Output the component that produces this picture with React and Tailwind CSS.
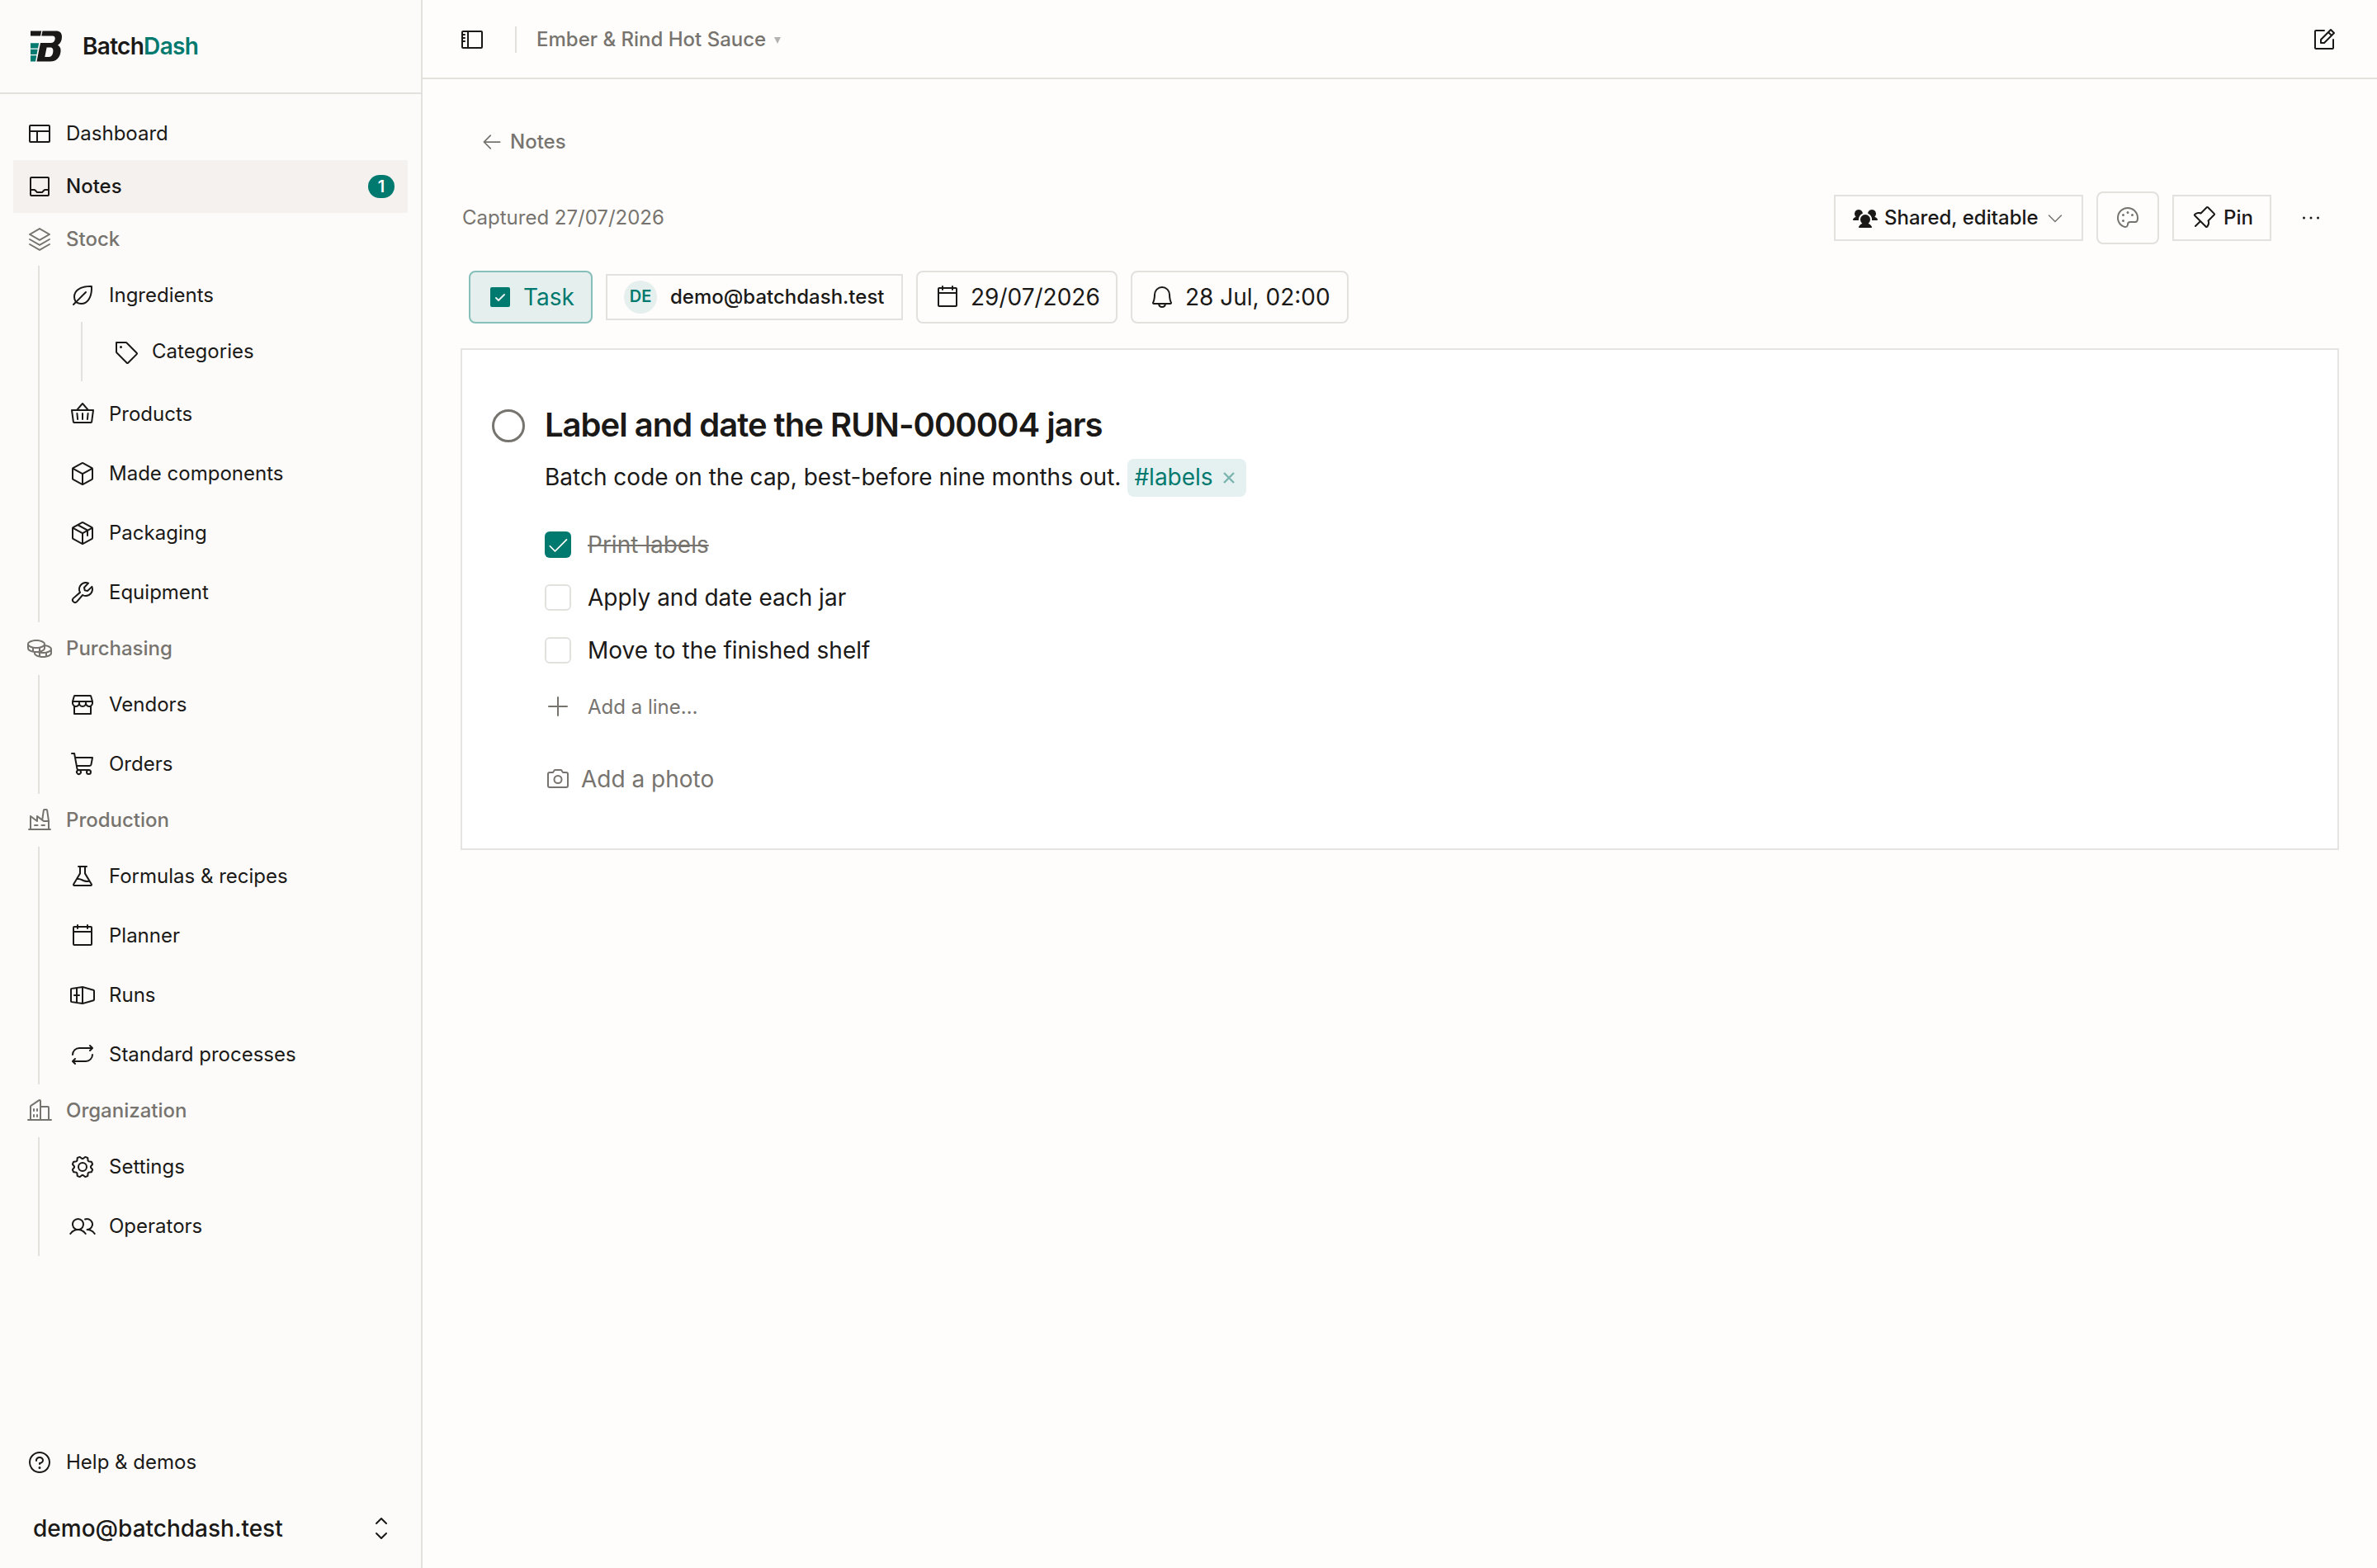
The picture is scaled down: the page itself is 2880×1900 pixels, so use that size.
import {
  PiArrowLeft, PiBasket, PiBell, PiBuildings, PiCalendarBlank, PiCamera, PiCaretDown,
  PiCaretUpDown, PiCheck, PiCheckSquareFill, PiCoins, PiCube, PiDotsThree, PiFactory, PiFlask,
  PiGear, PiLayout, PiLeaf, PiNotePencil, PiPackage, PiPalette, PiPlus, PiPushPin, PiQuestion,
  PiRepeat, PiShippingContainer, PiShoppingCart, PiSidebar, PiStack, PiStorefront, PiTag, PiTray,
  PiUsers, PiUsersThreeFill, PiWrench,
} from 'react-icons/pi'

const sections = [
  {
    title: 'Stock',
    icon: PiStack,
    items: [
      { label: 'Ingredients', icon: PiLeaf, children: [{ label: 'Categories', icon: PiTag }] },
      { label: 'Products', icon: PiBasket },
      { label: 'Made components', icon: PiCube },
      { label: 'Packaging', icon: PiPackage },
      { label: 'Equipment', icon: PiWrench },
    ],
  },
  {
    title: 'Purchasing',
    icon: PiCoins,
    items: [
      { label: 'Vendors', icon: PiStorefront },
      { label: 'Orders', icon: PiShoppingCart },
    ],
  },
  {
    title: 'Production',
    icon: PiFactory,
    items: [
      { label: 'Formulas & recipes', icon: PiFlask },
      { label: 'Planner', icon: PiCalendarBlank },
      { label: 'Runs', icon: PiShippingContainer },
      { label: 'Standard processes', icon: PiRepeat },
    ],
  },
  {
    title: 'Organization',
    icon: PiBuildings,
    items: [
      { label: 'Settings', icon: PiGear },
      { label: 'Operators', icon: PiUsers },
    ],
  },
]

const lines = [
  { text: 'Print labels', done: true },
  { text: 'Apply and date each jar', done: false },
  { text: 'Move to the finished shelf', done: false },
]

function Logo() {
  return (
    <svg viewBox="0 0 38 38" className="size-[38px]">
      <path fill="#1a1917" d="M0 .5h13.2L12 6.5H0z" />
      <path
        fill="#1a1917"
        fillRule="evenodd"
        d="M14.5.5H31c4.500 0 7 2.500 7 7 0 5-2 8.500-5 10.200 2.600 1.300 4 3.800 3.500 7.800C35.700 33 31 37.500 24 37.500H7.500L12 15h12.500c3 0 4.800-1.800 5.200-4.700.3-2.400-.8-3.800-3.200-3.800H13.300zM19.600 20.500 17.300 32H22c3 0 4.800-2 5.300-6 .5-3.600-.6-5.500-3.800-5.500z"
      />
      <path fill="#00796f" d="M0 15.300h10.200L9 21.400H0zM0 22.700h8.700L7.500 29H0zM0 30.300h7.300L6 37.500H0z" />
    </svg>
  )
}

function NavItem({ item }) {
  const Icon = item.icon
  return (
    <li>
      <a className="flex h-16 items-center gap-4 px-4">
        <Icon className="size-8 shrink-0" />
        <span>{item.label}</span>
      </a>
      {item.children && (
        <ul className="ml-[30px] flex flex-col gap-2 border-l-2 border-[#e2e1de] py-1 pl-5">
          {item.children.map(child => <NavItem key={child.label} item={child} />)}
        </ul>
      )}
    </li>
  )
}

function Sidebar() {
  return (
    <aside className="flex w-[512px] shrink-0 flex-col border-r-2 border-[#e2e1de] bg-[#fcfbf9]">
      <div className="flex h-[114px] items-center gap-[25px] border-b-2 border-[#e2e1de] pl-[37px]">
        <Logo />
        <span className="text-[28px] font-semibold tracking-tight">
          Batch<span className="text-[#00796f]">Dash</span>
        </span>
      </div>

      <nav className="flex-1 px-4 pt-4 text-2xl">
        <a className="flex h-16 items-center gap-4 px-4">
          <PiLayout className="size-8" />
          <span>Dashboard</span>
        </a>
        <a className="flex h-16 items-center gap-4 rounded-xs bg-[#f4f1ef] px-4 font-medium">
          <PiTray className="size-8" />
          <span>Notes</span>
          <span className="ml-auto flex h-7 w-8 items-center justify-center rounded-full bg-[#00796f] text-xl font-semibold text-white">
            1
          </span>
        </a>

        {sections.map(section => (
          <div key={section.title}>
            <div className="flex h-16 items-center gap-4 px-4 font-medium text-[#77746f]">
              <section.icon className="size-8" />
              <span>{section.title}</span>
            </div>
            <ul className="ml-[30px] flex flex-col gap-2 border-l-2 border-[#e2e1de] py-1 pl-5">
              {section.items.map(item => <NavItem key={item.label} item={item} />)}
            </ul>
          </div>
        ))}
      </nav>

      <a className="flex h-16 items-center gap-4 px-8 text-2xl">
        <PiQuestion className="size-8" />
        <span>Help &amp; demos</span>
      </a>
      <button className="flex h-24 items-center justify-between pr-8 pl-10 text-[28px] font-medium">
        <span>demo@batchdash.test</span>
        <PiCaretUpDown className="size-8" />
      </button>
    </aside>
  )
}

function TopBar() {
  return (
    <header className="flex h-24 shrink-0 items-center border-b-2 border-[#e2e1de] pt-0.5 pr-12 pl-11">
      <PiSidebar className="size-8" />
      <div className="ml-9 h-8 w-0.5 bg-[#e2e1de]" />
      <span className="ml-6 text-2xl font-medium text-[#77746f]">Ember &amp; Rind Hot Sauce</span>
      <svg viewBox="0 0 8 8" className="mt-0.5 ml-2.5 size-2">
        <path fill="#b5b3af" d="M0 0h8L4 8z" />
      </svg>
      <PiNotePencil className="ml-auto size-8" />
    </header>
  )
}

function Toolbar() {
  return (
    <div className="flex h-16 items-center justify-between">
      <p className="text-2xl text-[#77746f]">Captured 27/07/2026</p>
      <div className="flex items-center gap-4 text-2xl font-medium">
        <button className="flex h-14 w-[302px] items-center border-2 border-[#e2e1de] pl-5">
          <PiUsersThreeFill className="size-8" />
          <span className="ml-[7px]">Shared, editable</span>
          <PiCaretDown className="ml-2 size-6 text-[#77746f]" />
        </button>
        <button className="flex h-16 w-19 items-center justify-center rounded-lg border-2 border-[#e2e1de] text-[#77746f]">
          <PiPalette className="size-8" />
        </button>
        <button className="flex h-14 w-30 items-center gap-2 border-2 border-[#e2e1de] pl-5">
          <PiPushPin className="size-8" />
          <span>Pin</span>
        </button>
        <button className="flex size-16 items-center justify-center">
          <PiDotsThree className="size-8" />
        </button>
      </div>
    </div>
  )
}

function Chips() {
  return (
    <div className="mt-8 flex h-16 items-center gap-4 pl-2 text-[28px]">
      <button className="flex h-16 w-[150px] items-center gap-3 rounded-lg border-2 border-[#86bfba] bg-[#e5efed] pl-5 text-[#00796f]">
        <PiCheckSquareFill className="size-8" />
        <span>Task</span>
      </button>
      <button className="flex h-14 w-[360px] items-center gap-4 border-2 border-[#e2e1de] pl-5 text-2xl font-medium">
        <span className="flex size-10 items-center justify-center rounded-full bg-[#e5efed] pb-0.5 text-xl font-semibold text-[#00796f]">
          DE
        </span>
        <span>demo@batchdash.test</span>
      </button>
      <button className="flex h-16 w-[244px] items-center gap-3 rounded-lg border-2 border-[#e2e1de] pl-5">
        <PiCalendarBlank className="size-8" />
        <span>29/07/2026</span>
      </button>
      <button className="flex h-16 w-[264px] items-center gap-3 rounded-lg border-2 border-[#e2e1de] pl-5">
        <PiBell className="size-8" />
        <span>28 Jul, 02:00</span>
      </button>
    </div>
  )
}

function NoteCard() {
  return (
    <section className="mt-8 flex h-[604px] gap-6 bg-white pt-[72px] pl-9 ring-2 ring-[#e5e4e2]">
      <button className="size-10 shrink-0 rounded-full border-3 border-[#77746f]" />
      <div className="flex flex-col text-[28px]">
        <h1 className="h-10 text-[40px] leading-[38px] font-semibold tracking-tight">
          Label and date the RUN-000004 jars
        </h1>
        <div className="mt-5 flex h-[46px] items-center">
          <p className="pb-[3px]">Batch code on the cap, best-before nine months out.</p>
          <span className="ml-2 flex h-[46px] items-center rounded-lg bg-[#e5f0f0] pr-3.5 pl-2 text-[#00796f]">
            <span className="pb-[3px]">#labels</span>
            <svg viewBox="0 0 14 14" className="ml-3 size-3.5">
              <path d="M1 1l12 12M13 1L1 13" stroke="#7ab5b0" strokeWidth="2.400" />
            </svg>
          </span>
        </div>

        <ul className="mt-[26px]">
          {lines.map(line => (
            <li key={line.text} className="flex h-16 items-center gap-5">
              {line.done ? (
                <span className="flex size-8 items-center justify-center rounded-md bg-[#00796f] text-white">
                  <PiCheck className="size-7" />
                </span>
              ) : (
                <span className="size-8 rounded-md border-2 border-[#e2e1de]" />
              )}
              <span className={line.done ? 'text-[#77746f] line-through' : ''}>{line.text}</span>
            </li>
          ))}
        </ul>

        <div className="mt-1 flex h-16 items-center gap-5 text-2xl text-[#77746f]">
          <PiPlus className="size-8" />
          <span className="pt-0.5">Add a line…</span>
        </div>
        <button className="mt-6 flex h-16 items-center gap-3 text-[#77746f]">
          <PiCamera className="size-8" />
          <span>Add a photo</span>
        </button>
      </div>
    </section>
  )
}

export default function App() {
  return (
    <div className="flex h-[1900px] w-[2880px] bg-[#fefdfb] font-['Inter',sans-serif] text-[#1a1917]">
      <Sidebar />
      <div className="flex flex-1 flex-col">
        <TopBar />
        <main className="px-12 pt-11">
          <a className="flex h-16 items-center gap-2 pl-[22px] text-2xl font-medium text-[#77746f]">
            <PiArrowLeft className="size-7" />
            <span>Notes</span>
          </a>
          <div className="mt-7">
            <Toolbar />
          </div>
          <Chips />
          <NoteCard />
        </main>
      </div>
    </div>
  )
}
